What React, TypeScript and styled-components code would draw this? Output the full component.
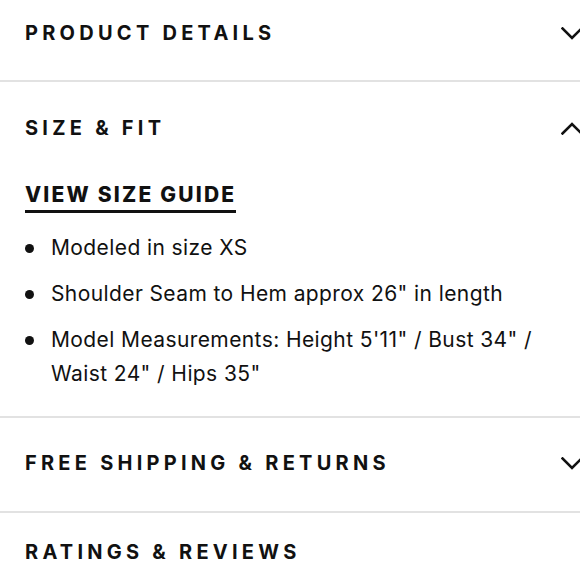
import React from "react";
import styled, { createGlobalStyle } from "styled-components";

const Global = createGlobalStyle`
  html, body { margin: 0; padding: 0; background: #fff; overflow: hidden; }
  body { width: 580px; height: 580px; }
`;

const Page = styled.div`
  width: 580px;
  display: flex;
  flex-direction: column;
  color: #111;
`;

const Section = styled.section<{ $last?: boolean }>`
  border-bottom: ${(p) => (p.$last ? "none" : "2px solid #e2e2e2")};
`;

const Header = styled.div<{ $top: number; $bottom: number }>`
  display: flex;
  align-items: center;
  justify-content: space-between;
  padding: ${(p) => p.$top}px 0 ${(p) => p.$bottom}px 25px;
`;

const Title = styled.h2`
  margin: 0;
  font-family: Inter, "Liberation Sans", sans-serif;
  font-weight: 700;
  font-size: 20px;
  line-height: 20px;
  letter-spacing: 4.25px;
  text-transform: uppercase;
  color: #111;
`;

const Chevron = styled.svg`
  width: 22px;
  height: 13px;
  margin-right: -3px;
  flex: none;
`;

const Body = styled.div`
  padding: 8px 25px 25px 25px;
  display: flex;
  flex-direction: column;
`;

const GuideLink = styled.a`
  align-self: flex-start;
  font-family: Inter, "Liberation Sans", sans-serif;
  font-weight: 800;
  font-size: 21px;
  line-height: 22px;
  letter-spacing: 2.2px;
  color: #111;
  text-decoration: none;
  border-bottom: 3px solid #111;
  padding-bottom: 4px;
`;

const List = styled.ul`
  list-style: none;
  margin: 18px 0 0 0;
  padding: 0;
  display: flex;
  flex-direction: column;
  gap: 12px;
`;

const Item = styled.li`
  position: relative;
  padding-left: 26px;
  font-family: Inter, "Liberation Sans", sans-serif;
  font-size: 21px;
  line-height: 34px;
  letter-spacing: 0.4px;
  color: #111;
  &::before {
    content: "";
    position: absolute;
    left: 0;
    top: 13px;
    width: 9px;
    height: 9px;
    border-radius: 50%;
    background: #111;
  }
`;

const Down = () => (
  <Chevron viewBox="0 0 22 13" fill="none">
    <path d="M1.5 1.5 L11 11 L20.5 1.5" stroke="#111" strokeWidth="2.6" strokeLinecap="square" />
  </Chevron>
);
const Up = () => (
  <Chevron viewBox="0 0 22 13" fill="none">
    <path d="M1.5 11.5 L11 2 L20.5 11.5" stroke="#111" strokeWidth="2.6" strokeLinecap="square" />
  </Chevron>
);

export default function App() {
  return (
    <>
      <Global />
      <Page>
        <Section>
          <Header $top={23} $bottom={37}>
            <Title>Product Details</Title>
            <Down />
          </Header>
        </Section>
        <Section>
          <Header $top={36} $bottom={38}>
            <Title>Size &amp; Fit</Title>
            <Up />
          </Header>
          <Body>
            <GuideLink href="#">VIEW SIZE GUIDE</GuideLink>
            <List>
              <Item>Modeled in size XS</Item>
              <Item>Shoulder Seam to Hem approx 26" in length</Item>
              <Item>Model Measurements: Height 5'11" / Bust 34" / Waist 24" / Hips 35"</Item>
            </List>
          </Body>
        </Section>
        <Section>
          <Header $top={35} $bottom={38}>
            <Title>Free Shipping &amp; Returns</Title>
            <Down />
          </Header>
        </Section>
        <Section $last>
          <Header $top={29} $bottom={37}>
            <Title>Ratings &amp; Reviews</Title>
          </Header>
        </Section>
      </Page>
    </>
  );
}
